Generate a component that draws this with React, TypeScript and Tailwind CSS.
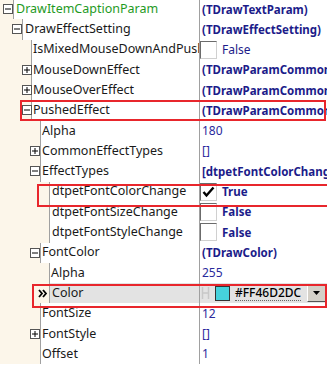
import React from "react";

type Val =
  | { kind: "bold"; text: string }
  | { kind: "reg"; text: string }
  | { kind: "check"; checked: boolean; text: string; bold: boolean }
  | { kind: "color" };

type Row = {
  name: string;
  line: number;
  icon?: "plus" | "minus" | "arrow";
  iconX?: number;
  textX: number;
  value: Val;
  green?: boolean;
  selected?: boolean;
};

const rows: Row[] = [
  { name: "DrawItemCaptionParam", line: 14, icon: "minus", iconX: 3, textX: 17, value: { kind: "bold", text: "(TDrawTextParam)" }, green: true },
  { name: "DrawEffectSetting", line: 23, icon: "minus", iconX: 12, textX: 26, value: { kind: "bold", text: "(TDrawEffectSetting)" } },
  { name: "IsMixedMouseDownAndPushedEffect", line: 32, textX: 34, value: { kind: "check", checked: false, text: "False", bold: false } },
  { name: "MouseDownEffect", line: 32, icon: "plus", iconX: 22, textX: 34, value: { kind: "bold", text: "(TDrawParamCommonEffect)" } },
  { name: "MouseOverEffect", line: 32, icon: "plus", iconX: 22, textX: 34, value: { kind: "bold", text: "(TDrawParamCommonEffect)" } },
  { name: "PushedEffect", line: 32, icon: "minus", iconX: 22, textX: 34, value: { kind: "bold", text: "(TDrawParamCommonEffect)" } },
  { name: "Alpha", line: 41, textX: 43, value: { kind: "reg", text: "180" } },
  { name: "CommonEffectTypes", line: 41, icon: "plus", iconX: 30, textX: 43, value: { kind: "reg", text: "[]" } },
  { name: "EffectTypes", line: 41, icon: "minus", iconX: 30, textX: 43, value: { kind: "bold", text: "[dtpetFontColorChange]" } },
  { name: "dtpetFontColorChange", line: 50, textX: 53, value: { kind: "check", checked: true, text: "True", bold: true } },
  { name: "dtpetFontSizeChange", line: 50, textX: 53, value: { kind: "check", checked: false, text: "False", bold: true } },
  { name: "dtpetFontStyleChange", line: 50, textX: 53, value: { kind: "check", checked: false, text: "False", bold: true } },
  { name: "FontColor", line: 41, icon: "minus", iconX: 30, textX: 43, value: { kind: "bold", text: "(TDrawColor)" } },
  { name: "Alpha", line: 50, textX: 52, value: { kind: "reg", text: "255" } },
  { name: "Color", line: 50, icon: "arrow", iconX: 38, textX: 53, value: { kind: "color" }, selected: true },
  { name: "FontSize", line: 41, textX: 43, value: { kind: "reg", text: "12" } },
  { name: "FontStyle", line: 41, icon: "plus", iconX: 30, textX: 43, value: { kind: "reg", text: "[]" } },
  { name: "Offset", line: 41, textX: 43, value: { kind: "reg", text: "1" } },
];

function ExpandIcon({ type }: { type: "plus" | "minus" }) {
  return (
    <svg width="10" height="10" viewBox="0 0 10 10" className="block">
      <rect x="0.5" y="0.5" width="9" height="9" fill="#ffffff" stroke="#555555" />
      <line x1="2" y1="5" x2="8" y2="5" stroke="#000000" />
      {type === "plus" && <line x1="5" y1="2" x2="5" y2="8" stroke="#000000" />}
    </svg>
  );
}

function Arrow() {
  return (
    <svg width="10" height="9" viewBox="0 0 10 9" className="block">
      <path d="M1 1 L4 4.5 L1 8 M5 1 L8 4.5 L5 8" fill="none" stroke="#000" strokeWidth="1.8" />
    </svg>
  );
}

function CheckBox({ checked }: { checked: boolean }) {
  return (
    <div className="w-[17px] h-[18px] shrink-0 border-t border-l border-[#6b6b6b] border-r border-b border-r-[#d0d0d0] border-b-[#d0d0d0] bg-white flex items-center justify-center">
      {checked && (
        <svg width="13" height="12" viewBox="0 0 13 12">
          <path d="M1.5 6 L4.5 9.5 L11.5 1.5" fill="none" stroke="#000" strokeWidth="2.4" />
        </svg>
      )}
    </div>
  );
}

function ValueCell({ v }: { v: Val }) {
  if (v.kind === "bold")
    return <span className="pl-[2px] font-bold text-[11.5px] text-[#1c1c8a] whitespace-nowrap">{v.text}</span>;
  if (v.kind === "reg")
    return <span className="pl-[2px] text-[12px] text-[#2a2a9c] whitespace-nowrap">{v.text}</span>;
  if (v.kind === "check")
    return (
      <div className="flex items-center h-full">
        <CheckBox checked={v.checked} />
        <span className={"pl-[5px] text-[#1c1c8a] whitespace-nowrap " + (v.bold ? "font-bold text-[11.5px]" : "text-[12px]")}>{v.text}</span>
      </div>
    );
  return (
    <div className="flex items-center h-full w-full">
      <svg width="9" height="14" viewBox="0 0 9 14" className="ml-[1px] shrink-0">
        <path d="M1.5 1 V13 M7.5 1 V13 M1.5 7 H7.5" stroke="#c8c8c8" strokeWidth="1.5" fill="none" />
      </svg>
      <div className="ml-[5px] w-[15px] h-[15px] border border-[#333] bg-[#46D2DC] shrink-0" />
      <span className="ml-[5px] font-medium text-[12px] text-black whitespace-nowrap border-b border-dotted border-[#666] leading-[15px]">#FF46D2DC</span>
      <div className="flex-1" />
      <div className="w-[19px] h-[17px] mr-[1px] bg-[#d4d0c8] border border-t-white border-l-white border-r-[#555] border-b-[#555] flex items-center justify-center">
        <svg width="7" height="4" viewBox="0 0 7 4">
          <path d="M0 0 H7 L3.5 4 Z" fill="#000" />
        </svg>
      </div>
    </div>
  );
}

export default function App() {
  return (
    <div
      className="relative w-[327px] h-[365px] overflow-hidden bg-white text-[12.5px]"
      style={{ fontFamily: '"Noto Sans", "Open Sans", sans-serif' }}
    >
      <div className="flex flex-col -mt-[1px]">
        {rows.map((r, i) => (
          <div key={i} className="flex h-[20.3px] shrink-0">
            <div className="flex w-[199px] shrink-0 overflow-hidden">
              <div className="relative shrink-0 bg-[#fcf6ea] h-full border-r border-[#a0a0a0]" style={{ width: r.line }}>
                {r.icon && r.icon !== "arrow" && (
                  <div className="absolute top-[5px]" style={{ left: r.iconX }}>
                    <ExpandIcon type={r.icon} />
                  </div>
                )}
                {r.icon === "arrow" && (
                  <div className="absolute top-[6px]" style={{ left: r.iconX }}>
                    <Arrow />
                  </div>
                )}
              </div>
              <div
                className={
                  "flex-1 flex items-center whitespace-nowrap overflow-hidden " +
                  (r.selected ? "bg-[#e3e3e3] " : "") +
                  (r.green ? "text-[#1f9a1f]" : "text-[#1a1a1a]")
                }
                style={{ paddingLeft: r.textX - r.line - 1 }}
              >
                {r.name}
              </div>
            </div>
            <div className="w-px bg-[#a0a0a0] shrink-0" />
            <div className={"flex-1 flex items-center overflow-hidden " + (r.selected ? "bg-[#e3e3e3]" : "")}>
              <ValueCell v={r.value} />
            </div>
          </div>
        ))}
      </div>
      {/* annotation boxes */}
      <div className="absolute left-[20px] top-[100px] w-[306px] h-[21px] border-2 border-[#e8262c]" />
      <div className="absolute left-[37px] top-[184px] w-[300px] h-[23px] border-2 border-[#e8262c]" />
      <div className="absolute left-[32px] top-[284px] w-[295px] h-[24px] border-2 border-[#e8262c]" />
    </div>
  );
}
